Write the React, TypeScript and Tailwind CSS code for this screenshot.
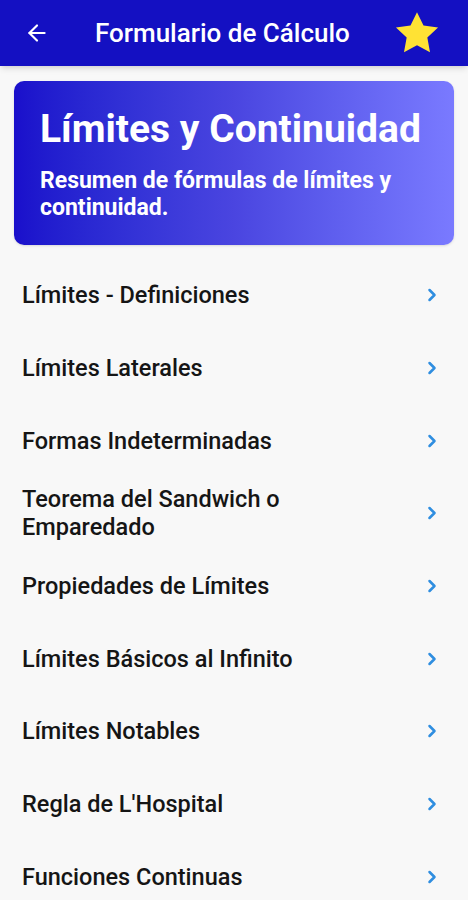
import { ArrowLeft, ChevronRight } from "lucide-react";

const items = [
  "Límites - Definiciones",
  "Límites Laterales",
  "Formas Indeterminadas",
  "Teorema del Sandwich o Emparedado",
  "Propiedades de Límites",
  "Límites Básicos al Infinito",
  "Límites Notables",
  "Regla de L'Hospital",
  "Funciones Continuas",
];

const App = () => {
  return (
    <div className="min-h-[900px] bg-[#f8f8f8] font-['Roboto',sans-serif]">
      <div className="h-[66px] bg-[#1410c2] flex items-center px-[24px] shadow-md">
        <ArrowLeft className="text-white w-[26px] h-[26px]" strokeWidth={2} />
        <span className="ml-[45px] text-white text-[26px] font-medium">Formulario de Cálculo</span>
        <svg className="ml-auto mr-[4px]" width="46" height="44" viewBox="0 0 24 23">
          <path
            d="M12 0.6l3.4 7 7.6 1-5.6 5.3 1.4 7.6L12 17.9l-6.8 3.6 1.4-7.6L1 8.6l7.6-1z"
            fill="#ffe234"
          />
        </svg>
      </div>

      <div className="px-[14px] pt-[15px]">
        <div className="rounded-[10px] bg-gradient-to-r from-[#1a0fcb] via-[#4a45e0] to-[#7a7aff] px-[26px] pt-[25px] pb-[24px] shadow-sm">
          <h1 className="text-white text-[39px] font-bold leading-[46px]">Límites y Continuidad</h1>
          <p className="text-white text-[23px] font-bold leading-[27px] mt-[15px]">
            Resumen de fórmulas de límites y continuidad.
          </p>
        </div>
      </div>

      <ul className="mt-[14px]">
        {items.map((item) => (
          <li key={item} className="h-[72.7px] flex items-center pl-[22px] pr-[26px]">
            <span className="flex-1 text-[23.5px] font-medium leading-[28px] text-[#151515] pr-[120px]">{item}</span>
            <ChevronRight className="text-[#2f8ee0] w-[20px] h-[20px]" strokeWidth={3} />
          </li>
        ))}
      </ul>
    </div>
  );
};

export default App;
